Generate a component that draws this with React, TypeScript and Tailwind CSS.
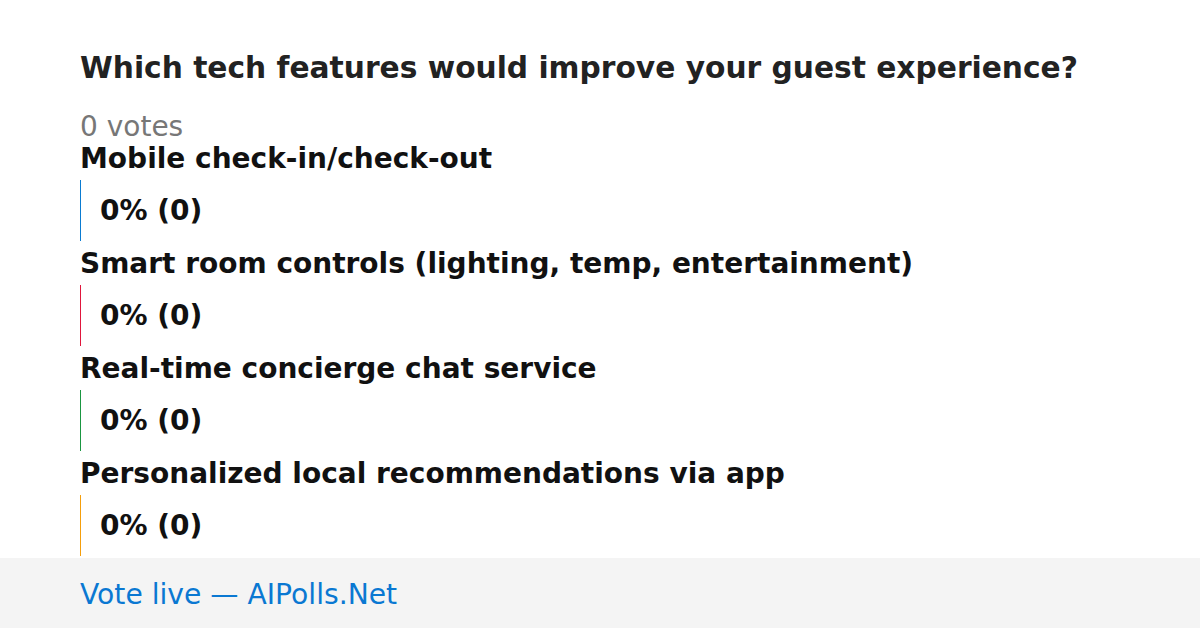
const options = [
  { label: "Mobile check-in/check-out", bar: "border-[#0a7bd1]" },
  { label: "Smart room controls (lighting, temp, entertainment)", bar: "border-[#e0163c]" },
  { label: "Real-time concierge chat service", bar: "border-[#1a9641]" },
  { label: "Personalized local recommendations via app", bar: "border-[#f59e0b]" },
]

export default function App() {
  return (
    <div className="w-[1200px] h-[628px] bg-white flex flex-col font-['DejaVu_Sans',sans-serif]">
      <div className="flex-1 px-20 pt-[50px]">
        <h1 className="text-[29.7px] leading-[36px] font-bold text-[#222]">
          Which tech features would improve your guest experience?
        </h1>
        <div className="mt-[26px] text-[28px] leading-[30px] text-[#777]">0 votes</div>
        <div className="flex flex-col gap-[6px]">
          {options.map((o) => (
            <div key={o.label} className="flex flex-col">
              <div className="text-[28px] leading-[34px] font-bold text-[#111]">{o.label}</div>
              <div className={`mt-[4px] h-[61px] border-l ${o.bar} flex items-center pl-[19px]`}>
                <span className="text-[28px] font-bold text-[#111]">0% (0)</span>
              </div>
            </div>
          ))}
        </div>
      </div>
      <div className="h-[70px] shrink-0 bg-[#f4f4f4] px-20 pt-[4px] flex items-center">
        <span className="text-[28.2px] text-[#0a78d2]">Vote live — AIPolls.Net</span>
      </div>
    </div>
  )
}
